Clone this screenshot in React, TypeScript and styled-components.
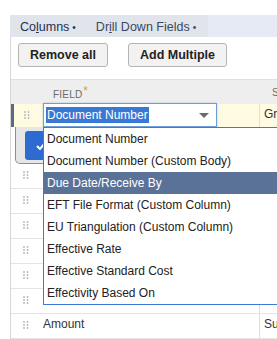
import styled, { createGlobalStyle } from "styled-components";

const GlobalStyle = createGlobalStyle`
  html, body {
    margin: 0;
    padding: 0;
    background: #ffffff;
    overflow: hidden;
  }
  body {
    font-family: "Liberation Sans", Arial, sans-serif;
  }
`;

const Page = styled.div`
  width: 277px;
  height: 339px;
  padding: 15px 0 0 10px;
  box-sizing: border-box;
  overflow: hidden;
`;

const TabBar = styled.div`
  display: flex;
  height: 22px;
  background: #e6eaf4;
`;

const TabGroup = styled.div`
  display: flex;
  align-items: center;
  gap: 20px;
  width: 198px;
  padding: 1px 0 0 10px;
  box-sizing: border-box;
  background: #e1e5eb;
`;

const Tab = styled.span<{ $active?: boolean }>`
  font-size: 12.5px;
  color: ${(p) => (p.$active ? "#1d3155" : "#3a4862")};
  white-space: nowrap;

  u {
    text-decoration: underline;
  }
`;

const Dot = styled.span`
  margin-left: 3px;
  font-size: 10px;
`;

const Panel = styled.div`
  border-left: 1px solid #d6d6d6;
  background: #ffffff;
`;

const Toolbar = styled.div`
  display: flex;
  gap: 20px;
  padding: 6px 0 12px 7px;
`;

const Button = styled.button`
  height: 24px;
  padding: 0 11px;
  border: 1px solid #b4b4b4;
  border-radius: 3px;
  background: #f2f2f2;
  color: #222222;
  font-family: "Liberation Sans", Arial, sans-serif;
  font-size: 12.5px;
  font-weight: bold;
`;

const HeaderRow = styled.div`
  display: grid;
  grid-template-columns: 29px 219px 1fr;
  height: 25px;
  box-sizing: border-box;
  border-top: 1px solid #e0e0e0;
  background: #eeeeee;
  align-items: center;
`;

const HeaderCell = styled.div`
  padding-left: 13px;
  font-size: 10px;
  color: #6a6a6a;
  letter-spacing: 0.2px;
  white-space: nowrap;

  sup {
    color: #e39b2d;
    font-size: 12px;
    margin-left: 1px;
    vertical-align: 3px;
  }
`;

const Row = styled.div<{ $edit?: boolean }>`
  display: grid;
  grid-template-columns: ${(p) => (p.$edit ? "26px 219px 1fr" : "29px 219px 1fr")};
  height: ${(p) => (p.$edit ? "23px" : "25px")};
  box-sizing: border-box;
  background: ${(p) => (p.$edit ? "#fffbe3" : "#ffffff")};
  border-left: ${(p) => (p.$edit ? "3px solid #5a6a85" : "none")};
  border-bottom: ${(p) => (p.$edit ? "none" : "1px solid #e4e4e4")};
`;

const HandleCell = styled.div`
  display: flex;
  justify-content: center;
  padding-top: 7px;
`;

const FieldCell = styled.div`
  position: relative;
  padding: 3px 0 0 3px;
  font-size: 12px;
  color: #333333;
  white-space: nowrap;
`;

const ValueCell = styled.div`
  border-left: 1px solid #dedede;
  padding: 3px 0 0 4px;
  font-size: 12px;
  color: #333333;
  white-space: nowrap;
`;

const Select = styled.div`
  position: relative;
  display: flex;
  align-items: center;
  width: 174px;
  height: 24px;
  margin-top: -4px;
  box-sizing: border-box;
  border: 1px solid #6d9edb;
  box-shadow: 0 0 2px #a9c8ef;
  background: #ffffff;
`;

const Chosen = styled.span`
  margin-left: 2px;
  padding: 1px 1px;
  background: #3978d3;
  color: #ffffff;
  font-size: 12px;
  line-height: 14px;
`;

const Arrow = styled.span`
  position: absolute;
  right: 7px;
  top: 9px;
  border-left: 5px solid transparent;
  border-right: 5px solid transparent;
  border-top: 5px solid #6b6b6b;
`;

const Menu = styled.ul`
  position: absolute;
  z-index: 5;
  left: 3px;
  top: 23px;
  width: 260px;
  margin: 0;
  padding: 0;
  list-style: none;
  border: 1px solid #3b7bd4;
  background: #ffffff;
`;

const MenuItem = styled.li<{ $hover?: boolean }>`
  height: 22px;
  line-height: 22px;
  padding-left: 3px;
  font-size: 12px;
  color: ${(p) => (p.$hover ? "#ffffff" : "#222222")};
  background: ${(p) => (p.$hover ? "#5b7298" : "transparent")};
`;

const ActionStrip = styled.div`
  width: 250px;
  height: 37px;
  margin-left: 4px;
  padding: 4px 0 0 9px;
  box-sizing: border-box;
  border: 1px solid #8e8e8e;
  border-top: none;
  border-bottom-left-radius: 5px;
  background: #e6e6e6;
`;

const OkButton = styled.div`
  display: flex;
  align-items: center;
  width: 52px;
  height: 29px;
  padding-left: 11px;
  box-sizing: border-box;
  border-radius: 3px;
  background: #2d6bd0;
`;

function Handle() {
  const dots = [0, 1, 2].flatMap((r) => [0, 1].map((c) => ({ r, c })));
  return (
    <svg width="6" height="8" viewBox="0 0 6 8">
      {dots.map(({ r, c }) => (
        <circle key={`${r}-${c}`} cx={1 + c * 3.5} cy={1 + r * 3} r="0.9" fill="#b4b4b4" />
      ))}
    </svg>
  );
}

const options = [
  "Document Number",
  "Document Number (Custom Body)",
  "Due Date/Receive By",
  "EFT File Format (Custom Column)",
  "EU Triangulation (Custom Column)",
  "Effective Rate",
  "Effective Standard Cost",
  "Effectivity Based On",
];

const rows = ["", "", "", "", "", ""];

export default function App() {
  return (
    <Page>
      <GlobalStyle />
      <TabBar>
        <TabGroup>
          <Tab $active>
            Co<u>l</u>umns<Dot>•</Dot>
          </Tab>
          <Tab>
            Dr<u>i</u>ll Down Fields<Dot>•</Dot>
          </Tab>
        </TabGroup>
      </TabBar>
      <Panel>
        <Toolbar>
          <Button>Remove all</Button>
          <Button>Add Multiple</Button>
        </Toolbar>
        <HeaderRow>
          <div />
          <HeaderCell>
            FIELD<sup>*</sup>
          </HeaderCell>
          <HeaderCell>SUMMARY TYPE</HeaderCell>
        </HeaderRow>
        <Row $edit>
          <HandleCell>
            <Handle />
          </HandleCell>
          <FieldCell>
            <Select>
              <Chosen>Document Number</Chosen>
              <Arrow />
            </Select>
            <Menu>
              {options.map((o) => (
                <MenuItem key={o} $hover={o === "Due Date/Receive By"}>
                  {o}
                </MenuItem>
              ))}
            </Menu>
          </FieldCell>
          <ValueCell>Group</ValueCell>
        </Row>
        <ActionStrip>
          <OkButton>
            <svg width="10" height="8" viewBox="0 0 10 8">
              <path d="M1 4 L4 7 L9 1" stroke="#ffffff" strokeWidth="2" fill="none" />
            </svg>
          </OkButton>
        </ActionStrip>
        {rows.map((r, i) => (
          <Row key={i}>
            <HandleCell>
              <Handle />
            </HandleCell>
            <FieldCell>{r}</FieldCell>
            <ValueCell />
          </Row>
        ))}
        <Row>
          <HandleCell>
            <Handle />
          </HandleCell>
          <FieldCell>Amount</FieldCell>
          <ValueCell>Sum</ValueCell>
        </Row>
      </Panel>
    </Page>
  );
}
